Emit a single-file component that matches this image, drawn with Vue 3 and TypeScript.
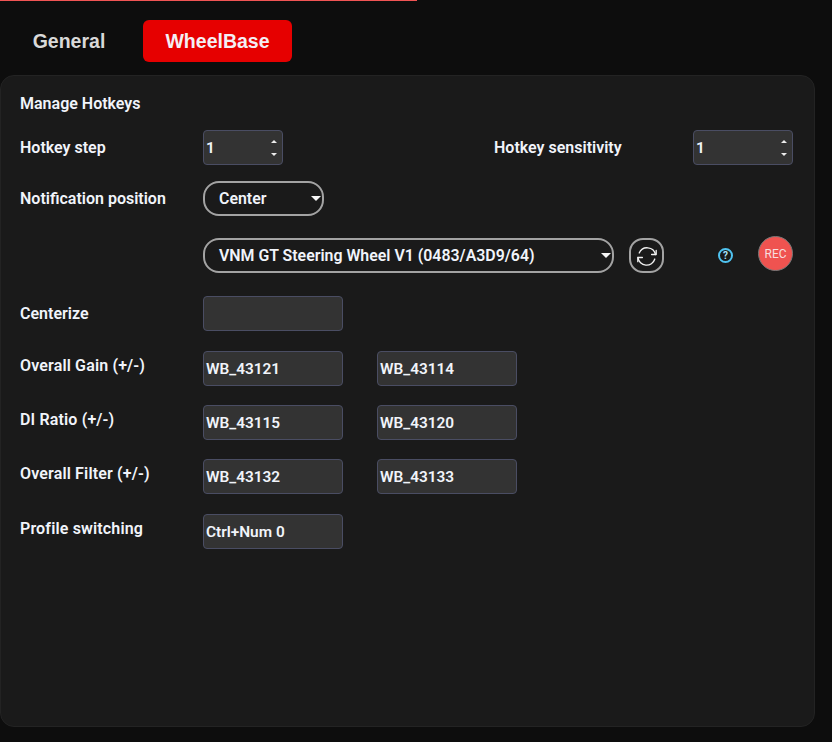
<script setup lang="ts">
const hotkeyRows = [
  { label: 'Overall Gain (+/-)', values: ['WB_43121', 'WB_43114'], gap: 'row--gain' },
  { label: 'DI Ratio (+/-)', values: ['WB_43115', 'WB_43120'], gap: 'row--ratio' },
  { label: 'Overall Filter (+/-)', values: ['WB_43132', 'WB_43133'], gap: 'row--filter' },
  { label: 'Profile switching', values: ['Ctrl+Num 0'], gap: 'row--profile' },
]
</script>

<template>
  <div class="page">
    <div class="progress"></div>
    <nav class="tabs">
      <button class="tab">General</button>
      <button class="tab tab--active">WheelBase</button>
    </nav>
    <section class="panel">
      <h2 class="title">Manage Hotkeys</h2>

      <div class="row row--step">
        <label class="label">Hotkey step</label>
        <div class="input spin">
          <span>1</span>
          <i class="spin__arrows"><b class="up"></b><b class="down"></b></i>
        </div>
        <label class="label label--sens">Hotkey sensitivity</label>
        <div class="input spin spin--wide">
          <span>1</span>
          <i class="spin__arrows"><b class="up"></b><b class="down"></b></i>
        </div>
      </div>

      <div class="row row--notif">
        <label class="label">Notification position</label>
        <div class="select select--small">
          <span>Center</span>
          <i class="caret"></i>
        </div>
      </div>

      <div class="row row--device">
        <span class="label"></span>
        <div class="select select--device">
          <span>VNM GT Steering Wheel V1 (0483/A3D9/64)</span>
          <i class="caret"></i>
        </div>
        <button class="refresh" aria-label="Refresh">
          <svg width="20" height="20" viewBox="0 0 20 20" fill="none" stroke="#f2f2f2" stroke-width="1.3" stroke-linecap="round" stroke-linejoin="round">
            <path d="M2.2 7A8.6 8.6 0 0 1 18.5 8.5" />
            <path d="M19.2 4.3V8.5H14.6" />
            <path d="M17.8 13A8.6 8.6 0 0 1 1 11.5" />
            <path d="M0.8 15.7V11.5H5.4" />
          </svg>
        </button>
        <span class="help">?</span>
        <button class="rec">REC</button>
      </div>

      <div class="row row--center">
        <label class="label">Centerize</label>
        <div class="input input--key"></div>
      </div>

      <div v-for="row in hotkeyRows" :key="row.label" class="row row--keys" :class="row.gap">
        <label class="label label--top">{{ row.label }}</label>
        <div v-for="v in row.values" :key="v" class="input input--key">{{ v }}</div>
      </div>
    </section>
  </div>
</template>

<style>
html,
body {
  margin: 0;
  background: #0d0d0d;
}
</style>

<style scoped>
.page {
  width: 832px;
  height: 742px;
  overflow: hidden;
  background: #0d0d0d;
  font-family: Roboto, 'Liberation Sans', sans-serif;
  color: #f1f4fa;
}

.progress {
  width: 417px;
  height: 1px;
  background: #f05454;
}

.tabs {
  display: flex;
  gap: 5px;
  padding: 19px 0 0 0;
  height: 74px;
  box-sizing: border-box;
}

.tab {
  width: 138px;
  height: 42px;
  border: none;
  border-radius: 6px;
  background: transparent;
  color: #d9d9d9;
  font-family: 'Liberation Sans', Arial, sans-serif;
  font-size: 19.5px;
  font-weight: 700;
}

.tab--active {
  width: 149px;
  background: #e60000;
  color: #f4eef4;
}

.panel {
  width: 815px;
  height: 652px;
  box-sizing: border-box;
  padding: 19px 21px 0 19px;
  background: #1a1a1a;
  border: 1px solid #232323;
  border-radius: 14px;
}

.title {
  margin: 0;
  font-size: 16px;
  line-height: 18px;
  font-weight: 600;
}

.row {
  display: flex;
  align-items: center;
}

.row--step { margin-top: 17px; }
.row--notif { margin-top: 16px; }
.row--device { margin-top: 22px; }
.row--center { margin-top: 23px; }
.row--gain { margin-top: 20px; }
.row--ratio { margin-top: 19px; }
.row--filter { margin-top: 19px; }
.row--profile { margin-top: 20px; }

.label {
  width: 183px;
  flex-shrink: 0;
  font-size: 16px;
  font-weight: 600;
  line-height: 18px;
}

.label--top {
  align-self: flex-start;
  margin-top: 6px;
  letter-spacing: 0.15px;
}

.label--sens {
  width: 199px;
  margin-left: 211px;
}

.input {
  box-sizing: border-box;
  height: 35px;
  display: flex;
  align-items: center;
  padding: 0 2px;
  background: #333333;
  border: 1px solid #4a4d63;
  border-radius: 4px;
  font-size: 15.4px;
  font-weight: 600;
}

.input--key {
  width: 140px;
  margin-right: 34px;
}

.spin {
  position: relative;
  width: 80px;
}

.spin--wide {
  width: 100px;
}

.spin__arrows {
  position: absolute;
  right: 4px;
  top: 0;
  bottom: 0;
  width: 9px;
  display: flex;
  flex-direction: column;
  justify-content: center;
  gap: 10px;
  align-items: center;
}

.up,
.down {
  width: 0;
  height: 0;
  border-left: 3.5px solid transparent;
  border-right: 3.5px solid transparent;
}

.up { border-bottom: 3.5px solid #ececec; }
.down { border-top: 3.5px solid #ececec; }

.select {
  position: relative;
  box-sizing: border-box;
  height: 35px;
  display: flex;
  align-items: center;
  padding-left: 14px;
  border: 2px solid #a3a3a3;
  border-radius: 16px;
  font-size: 15.9px;
  font-weight: 600;
}

.select--small { width: 121px; }
.select--device { width: 411px; }

.caret {
  position: absolute;
  right: 1px;
  top: 13px;
  width: 0;
  height: 0;
  border-left: 5.5px solid transparent;
  border-right: 5.5px solid transparent;
  border-top: 5px solid #f5f5f5;
}

.refresh {
  width: 35px;
  height: 35px;
  margin-left: 15px;
  padding: 0;
  display: flex;
  align-items: center;
  justify-content: center;
  background: transparent;
  border: 2px solid #a3a3a3;
  border-radius: 14px;
}

.help {
  box-sizing: border-box;
  width: 15px;
  height: 15px;
  margin-left: 54px;
  display: flex;
  align-items: center;
  justify-content: center;
  border: 2px solid #4fc3f0;
  border-radius: 50%;
  color: #a8e4ff;
  font-size: 10px;
  font-weight: 700;
}

.rec {
  box-sizing: border-box;
  width: 35px;
  height: 35px;
  margin: -4px 0 0 25px;
  padding: 0;
  border: 1px solid #777;
  border-radius: 50%;
  background: #ef5350;
  color: #f7dede;
  font-family: Roboto, sans-serif;
  font-size: 12px;
}
</style>
